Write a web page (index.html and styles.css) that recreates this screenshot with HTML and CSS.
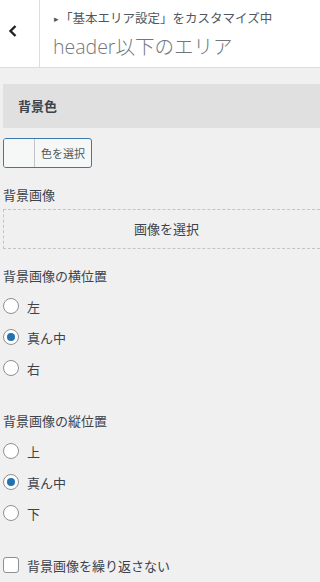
FILE: index.html
```html
<!DOCTYPE html>
<html lang="ja">
<head>
<meta charset="utf-8">
<title>header以下のエリア</title>
<link rel="stylesheet" href="styles.css">
</head>
<body>
<div class="panel">
  <header class="head">
    <button class="back" aria-label="戻る">
      <svg width="10" height="14" viewBox="0 0 10 14"><polyline points="7.5,2 2.5,7 7.5,12" fill="none" stroke="#1d2327" stroke-width="2.4" stroke-linejoin="miter"/></svg>
    </button>
    <div class="head-text">
      <div class="sub"><span class="tri">▸</span>「基本エリア設定」をカスタマイズ中</div>
      <div class="title"><span class="latin">header</span>以下のエリア</div>
    </div>
  </header>

  <main class="content">
    <div class="bar">背景色</div>

    <button class="color-btn">
      <span class="swatch"></span>
      <span class="color-text">色を選択</span>
    </button>

    <div class="label first">背景画像</div>
    <div class="dropzone">画像を選択</div>

    <div class="label">背景画像の横位置</div>
    <div class="radios">
      <div class="row"><span class="radio"></span><span>左</span></div>
      <div class="row"><span class="radio on"></span><span>真ん中</span></div>
      <div class="row"><span class="radio"></span><span>右</span></div>
    </div>

    <div class="label second">背景画像の縦位置</div>
    <div class="radios">
      <div class="row"><span class="radio"></span><span>上</span></div>
      <div class="row"><span class="radio on"></span><span>真ん中</span></div>
      <div class="row"><span class="radio"></span><span>下</span></div>
    </div>

    <div class="row check-row"><span class="checkbox"></span><span>背景画像を繰り返さない</span></div>
  </main>
</div>
</body>
</html>
```

FILE: styles.css
```css
html, body {
  margin: 0;
  padding: 0;
}
html {
  overflow: hidden;
}
body {
  background: #f0f0f1;
  font-family: "Noto Sans CJK JP", "Open Sans", sans-serif;
  color: #3c434a;
}
.panel {
  width: 100%;
  height: 582px;
  overflow: hidden;
}
.head {
  display: flex;
  height: 67px;
  background: #fff;
  border-bottom: 1px solid #dcdcde;
}
.back {
  width: 40px;
  flex: none;
  border: 0;
  border-right: 1px solid #dcdcde;
  background: #fff;
  padding: 0 0 6px 8px;
  margin: 0;
  display: flex;
  align-items: center;
  justify-content: flex-start;
}
.head-text {
  padding: 10px 0 0 14px;
  white-space: nowrap;
}
.sub {
  font-size: 12.5px;
  line-height: 16px;
  color: #50575e;
}
.tri {
  font-size: 9px;
  color: #50575e;
  margin-right: 1px;
  position: relative;
  top: -1px;
}
.title {
  margin-top: 5px;
  font-size: 19.5px;
  line-height: 26px;
  font-weight: 300;
  color: #72777c;
  margin-left: -1px;
}
.latin {
  font-family: "Open Sans", sans-serif;
  font-weight: 300;
}
.content {
  padding-left: 3px;
}
.bar {
  margin-top: 16px;
  height: 44px;
  line-height: 44px;
  background: #e0e0e1;
  padding-left: 15px;
  font-size: 13px;
  font-weight: 700;
  color: #3c434a;
}
.color-btn {
  display: flex;
  margin: 10px 0 0 0;
  padding: 0;
  width: 89px;
  height: 30px;
  border: 1px solid #3a78ad;
  border-radius: 3px;
  background: #f6f7f7;
  overflow: hidden;
  font-family: inherit;
}
.swatch {
  width: 30px;
  height: 100%;
  background: #f6f7f7;
  border-right: 1px solid #c3c4c7;
}
.color-text {
  flex: 1;
  font-size: 11px;
  line-height: 28px;
  color: #50575e;
  text-align: center;
}
.label {
  font-size: 13px;
  line-height: 18px;
  color: #3c434a;
  margin-top: 18px;
}
.label.second {
  margin-top: 34px;
}
.dropzone {
  margin-top: 5px;
  width: calc(100% + 8px);
  height: 38px;
  border: 1px dashed #c3c4c7;
  line-height: 38px;
  text-align: center;
  font-size: 13px;
  color: #3c434a;
}
.radios {
  display: flex;
  flex-direction: column;
  gap: 11px;
  margin-top: 11px;
}
.row {
  display: flex;
  align-items: center;
  gap: 8px;
  height: 20px;
  font-size: 13px;
  color: #3c434a;
}
.radio {
  width: 14px;
  height: 14px;
  border: 1px solid #8c8f94;
  border-radius: 50%;
  background: #fff;
  position: relative;
  flex: none;
}
.radio.on::after {
  content: "";
  position: absolute;
  left: 3px;
  top: 3px;
  width: 8px;
  height: 8px;
  border-radius: 50%;
  background: #2271b1;
}
.check-row {
  margin-top: 32px;
}
.checkbox {
  width: 14px;
  height: 14px;
  border: 1px solid #8c8f94;
  border-radius: 3px;
  background: #fff;
  flex: none;
}
```
